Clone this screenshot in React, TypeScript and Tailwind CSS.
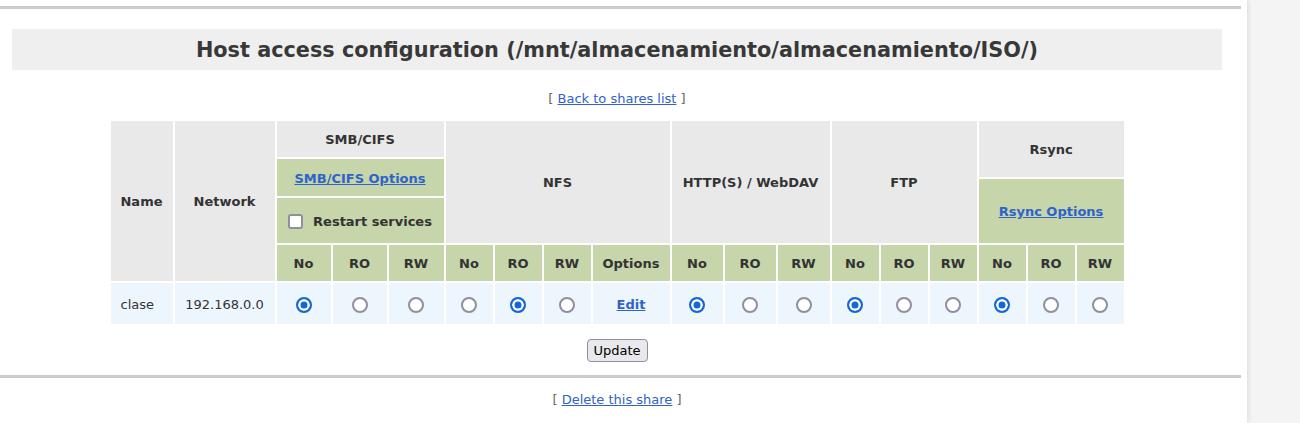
import React from "react"

const font = { fontFamily: '"DejaVu Sans", Verdana, sans-serif' }

// sub header labels under each protocol
const subHeads = [
  { label: "No", col: "col-start-3" },
  { label: "RO", col: "col-start-4" },
  { label: "RW", col: "col-start-5" },
  { label: "No", col: "col-start-6" },
  { label: "RO", col: "col-start-7" },
  { label: "RW", col: "col-start-8" },
  { label: "Options", col: "col-start-9" },
  { label: "No", col: "col-start-10" },
  { label: "RO", col: "col-start-11" },
  { label: "RW", col: "col-start-12" },
  { label: "No", col: "col-start-13" },
  { label: "RO", col: "col-start-14" },
  { label: "RW", col: "col-start-15" },
  { label: "No", col: "col-start-16" },
  { label: "RO", col: "col-start-17" },
  { label: "RW", col: "col-start-18" },
]

const gray = "bg-[#e9e9e9] flex items-center justify-center pt-[2px] font-bold text-[13px] text-[#333]"
const green = "bg-[#c6d5aa] flex items-center justify-center pt-[2px] font-bold text-[13px] text-[#333]"
const blue = "bg-[#edf5fd] flex items-center justify-center pt-[3px] text-[13px] text-[#333]"

function Radio({ name, checked }: { name: string; checked?: boolean }) {
  return (
    <input
      type="radio"
      name={name}
      defaultChecked={checked}
      className="m-0 h-4 w-4 appearance-none rounded-full border-2 border-[#8f8f9d] bg-white checked:border-[#1467d6] checked:bg-[#1467d6] checked:shadow-[inset_0_0_0_2.5px_white]"
    />
  )
}

function Link({ children, bold }: { children: React.ReactNode; bold?: boolean }) {
  return (
    <a href="#" className={`text-[#2f63c9] underline ${bold ? "font-bold" : ""}`}>
      {children}
    </a>
  )
}

export default function App() {
  return (
    <div className="flex h-[423px] w-full overflow-hidden bg-[#f4f4f4]" style={font}>
      <div className="relative h-full w-[1247px] shrink-0 bg-white shadow-[2px_0_4px_rgba(0,0,0,0.08)]">
        <div className="h-[6px]" />
        <div className="h-[3px] w-[1241px] bg-[#cccccc]" />

        <div className="w-[1234px]">
          {/* Title */}
          <div className="mx-3 mt-[20px] flex h-[41px] items-center justify-center bg-[#efefef] pt-[2px]">
            <h1 className="text-[20.8px] font-bold text-[#383838]">
              Host access configuration (/mnt/almacenamiento/almacenamiento/ISO/)
            </h1>
          </div>

          <div className="mt-[21px] h-4 text-center text-[13px] leading-4 text-[#666]">
            [ <Link>Back to shares list</Link> ]
          </div>

          {/* Access table */}
          <div className="mt-[14px] flex justify-center">
            <div className="grid grid-cols-[62px_100px_54px_54px_55px_47px_47px_47px_77px_51px_51px_52px_47px_47px_47px_47px_47px_47px] grid-rows-[36px_18px_17px_45px_36px_41px] gap-[2px]">
              <div className={`${gray} col-start-1 row-start-1 row-span-5`}>Name</div>
              <div className={`${gray} col-start-2 row-start-1 row-span-5`}>Network</div>

              <div className={`${gray} col-start-3 col-span-3 row-start-1`}>SMB/CIFS</div>
              <div className={`${green} col-start-3 col-span-3 row-start-2 row-span-2`}>
                <Link bold>SMB/CIFS Options</Link>
              </div>
              <div className={`${green} col-start-3 col-span-3 row-start-4 gap-[10px]`}>
                <input
                  type="checkbox"
                  className="m-0 h-[15px] w-[15px] appearance-none rounded-[3px] border-2 border-[#8f8f9d] bg-white"
                />
                <span>Restart services</span>
              </div>

              <div className={`${gray} col-start-6 col-span-4 row-start-1 row-span-4`}>NFS</div>
              <div className={`${gray} col-start-10 col-span-3 row-start-1 row-span-4`}>HTTP(S) / WebDAV</div>
              <div className={`${gray} col-start-13 col-span-3 row-start-1 row-span-4`}>FTP</div>

              <div className={`${gray} col-start-16 col-span-3 row-start-1 row-span-2`}>Rsync</div>
              <div className={`${green} col-start-16 col-span-3 row-start-3 row-span-2`}>
                <Link bold>Rsync Options</Link>
              </div>

              {subHeads.map((h, i) => (
                <div key={i} className={`${green} ${h.col} row-start-5`}>
                  {h.label}
                </div>
              ))}

              {/* data row */}
              <div className={`${blue} col-start-1 row-start-6 justify-start pl-[10px]`}>clase</div>
              <div className={`${blue} col-start-2 row-start-6`}>192.168.0.0</div>

              <div className={`${blue} col-start-3 row-start-6`}><Radio name="smb" checked /></div>
              <div className={`${blue} col-start-4 row-start-6`}><Radio name="smb" /></div>
              <div className={`${blue} col-start-5 row-start-6`}><Radio name="smb" /></div>

              <div className={`${blue} col-start-6 row-start-6`}><Radio name="nfs" /></div>
              <div className={`${blue} col-start-7 row-start-6`}><Radio name="nfs" checked /></div>
              <div className={`${blue} col-start-8 row-start-6`}><Radio name="nfs" /></div>
              <div className={`${blue} col-start-9 row-start-6`}><Link bold>Edit</Link></div>

              <div className={`${blue} col-start-10 row-start-6`}><Radio name="http" checked /></div>
              <div className={`${blue} col-start-11 row-start-6`}><Radio name="http" /></div>
              <div className={`${blue} col-start-12 row-start-6`}><Radio name="http" /></div>

              <div className={`${blue} col-start-13 row-start-6`}><Radio name="ftp" checked /></div>
              <div className={`${blue} col-start-14 row-start-6`}><Radio name="ftp" /></div>
              <div className={`${blue} col-start-15 row-start-6`}><Radio name="ftp" /></div>

              <div className={`${blue} col-start-16 row-start-6`}><Radio name="rsync" checked /></div>
              <div className={`${blue} col-start-17 row-start-6`}><Radio name="rsync" /></div>
              <div className={`${blue} col-start-18 row-start-6`}><Radio name="rsync" /></div>
            </div>
          </div>

          <div className="mt-[15px] flex justify-center">
            <button className="h-[23px] w-[61px] rounded-[4px] border border-[#8f8f9d] bg-[#e9e9ed] text-[13px] text-black">
              Update
            </button>
          </div>
        </div>

        <div className="mt-[13px] h-[3px] w-[1241px] bg-[#cccccc]" />

        <div className="w-[1234px]">
          <div className="mt-[14px] h-4 text-center text-[13px] leading-4 text-[#666]">
            [ <Link>Delete this share</Link> ]
          </div>
        </div>
      </div>
    </div>
  )
}
